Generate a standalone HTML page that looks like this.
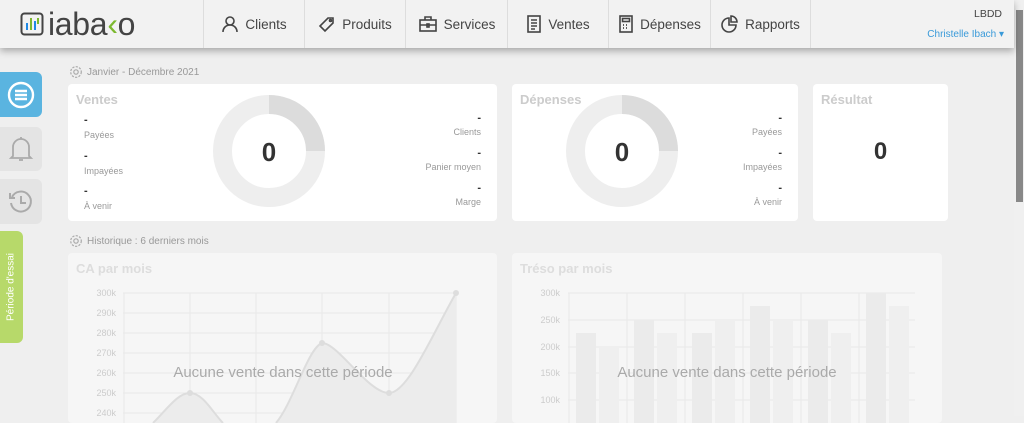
<!DOCTYPE html><html><head><meta charset="utf-8"><style>
*{margin:0;padding:0;box-sizing:border-box}
body{width:1024px;height:416px;overflow:hidden;background:#efefef;font-family:"Liberation Sans",sans-serif;position:relative;color:#555}
.hdr{position:absolute;left:0;top:0;width:1014px;height:48px;background:#f2f2f2;box-shadow:0 3px 7px rgba(0,0,0,.3);z-index:2}
.nav{position:absolute;top:0;height:48px;border-left:1px solid #ddd;display:flex;align-items:center;justify-content:center;font-size:13.5px;color:#444;gap:6px}
.abs{position:absolute}
.card{position:absolute;background:#fff;border-radius:4px}
.t{position:absolute;font-size:13px;font-weight:bold;color:#ccc}
.sm{position:absolute;font-size:9px;color:#999}
.dash{position:absolute;font-size:11px;color:#333;font-weight:bold}
.sec{position:absolute;font-size:10px;color:#999;display:flex;align-items:center;gap:4px}
.side{position:absolute;left:0;width:42px;border-radius:0 6px 6px 0;display:flex;align-items:center;justify-content:center}
</style></head><body>
<div class="hdr">
 <div class="abs" style="left:20px;top:11px;display:flex;align-items:center;gap:4px">
  <svg width="24" height="24" viewBox="0 0 24 24"><rect x="1.5" y="1.5" width="21" height="21" rx="3" fill="none" stroke="#444" stroke-width="2"/><rect x="6" y="11" width="2" height="7" fill="#1e88e5"/><rect x="10" y="6" width="2" height="12" fill="#7cb82f"/><rect x="14" y="9" width="2" height="9" fill="#1e88e5"/><rect x="17" y="6" width="2" height="6" fill="#7cb82f"/></svg>
  <span style="font-size:32px;color:#444;letter-spacing:-0.3px;line-height:26px">iaba<span style="color:#7cb82f">&lsaquo;</span>o</span>
 </div>
 <div class="nav" style="left:203px;width:101px"><svg width="18" height="18" viewBox="0 0 18 18" fill="none" stroke="#444" stroke-width="1.6"><circle cx="9" cy="6" r="4"/><path d="M2 17c0-4 3-7 7-7s7 3 7 7"/></svg>Clients</div>
 <div class="nav" style="left:304px;width:101px"><svg width="18" height="18" viewBox="0 0 18 18" fill="none" stroke="#444" stroke-width="1.6"><path d="M10 3l5 0 0 5-8 8-5-5z"/><circle cx="12.5" cy="5.5" r="1"/></svg>Produits</div>
 <div class="nav" style="left:405px;width:102px"><svg width="20" height="18" viewBox="0 0 20 18" fill="none" stroke="#444" stroke-width="1.6"><rect x="2" y="5" width="16" height="11"/><path d="M7 5V2h6v3M2 10h16"/><rect x="9" y="9" width="2" height="3"/></svg>Services</div>
 <div class="nav" style="left:507px;width:101px"><svg width="16" height="18" viewBox="0 0 16 18" fill="none" stroke="#444" stroke-width="1.6"><rect x="2" y="1" width="12" height="16"/><path d="M5 5h6M5 8h6M5 11h6M5 14h4"/></svg>Ventes</div>
 <div class="nav" style="left:608px;width:102px"><svg width="16" height="18" viewBox="0 0 16 18" fill="none" stroke="#444" stroke-width="1.6"><rect x="2" y="1" width="12" height="16"/><rect x="4.5" y="3.5" width="7" height="3"/><path d="M5 10h1M8 10h1M11 10h0M5 13h1M8 13h1M11 13h0" stroke-width="1.8"/></svg>Dépenses</div>
 <div class="nav" style="left:710px;width:101px;border-right:1px solid #ddd"><svg width="18" height="18" viewBox="0 0 18 18" fill="none" stroke="#444" stroke-width="1.6"><path d="M8 3a7 7 0 1 0 7 7H8z"/><path d="M10 1v6h6a6 6 0 0 0-6-6z"/></svg>Rapports</div>
 <div class="abs" style="right:12px;top:8px;font-size:10.5px;color:#444">LBDD</div>
 <div class="abs" style="right:10px;top:29px;font-size:10px;color:#3a9ad9">Christelle Ibach ▾</div>
</div>
<div class="abs" style="left:1014px;top:0;width:10px;height:416px;background:#f0f0f0"></div>
<div class="abs" style="left:1016px;top:10px;width:7px;height:192px;background:#888"></div>

<div class="side" style="top:72px;height:45px;background:#5ab4e0"><svg width="30" height="30" viewBox="0 0 30 30" fill="none" stroke="#fff" stroke-width="2.4"><circle cx="15" cy="15" r="12"/><path d="M9 11h12M9 15h12M9 19h12"/></svg></div>
<div class="side" style="top:127px;height:44px;background:#e4e4e4"><svg width="26" height="28" viewBox="0 0 26 28" fill="none" stroke="#aaa" stroke-width="1.8"><path d="M5 21V12a8 8 0 0 1 16 0v9l2 2H3z"/><path d="M11 25h4"/><path d="M13 2v2"/></svg></div>
<div class="side" style="top:179px;height:45px;background:#e4e4e4"><svg width="28" height="28" viewBox="0 0 28 28" fill="none" stroke="#aaa" stroke-width="2"><path d="M5 9a10 10 0 1 1-1 6"/><path d="M3 5v5h5"/><path d="M14 8v7h5"/></svg></div>
<div class="abs" style="left:0;top:231px;width:23px;height:112px;background:#b7d96a;border-radius:0 6px 6px 0"></div>
<div class="abs" style="left:11px;top:287px;transform:translate(-50%,-50%) rotate(-90deg);font-size:10px;color:#fff;white-space:nowrap">Période d'essai</div>

<div class="sec" style="left:69px;top:65px"><svg width="14" height="14" viewBox="0 0 14 14" fill="none" stroke="#aaa" stroke-width="1.2"><circle cx="7" cy="7" r="2.2"/><circle cx="7" cy="7" r="5.3" stroke-dasharray="2.2 1.3"/></svg>Janvier - Décembre 2021</div>
<div class="sec" style="left:69px;top:234px"><svg width="14" height="14" viewBox="0 0 14 14" fill="none" stroke="#aaa" stroke-width="1.2"><circle cx="7" cy="7" r="2.2"/><circle cx="7" cy="7" r="5.3" stroke-dasharray="2.2 1.3"/></svg>Historique : 6 derniers mois</div>

<div class="card" style="left:68px;top:84px;width:429px;height:137px">
 <div class="t" style="left:8px;top:8px">Ventes</div>
 <div class="dash" style="left:16px;top:30px">-</div><div class="sm" style="left:16px;top:46px">Payées</div>
 <div class="dash" style="left:16px;top:66px">-</div><div class="sm" style="left:16px;top:82px">Impayées</div>
 <div class="dash" style="left:16px;top:101px">-</div><div class="sm" style="left:16px;top:117px">À venir</div>
 <div class="dash" style="right:16px;top:28px">-</div><div class="sm" style="right:16px;top:43px">Clients</div>
 <div class="dash" style="right:16px;top:63px">-</div><div class="sm" style="right:16px;top:78px">Panier moyen</div>
 <div class="dash" style="right:16px;top:98px">-</div><div class="sm" style="right:16px;top:113px">Marge</div>
 <svg class="abs" style="left:145px;top:11px" width="112" height="112" viewBox="0 0 112 112"><circle cx="56" cy="56" r="46.5" fill="none" stroke="#eeeeee" stroke-width="19"/><path d="M56 9.5A46.5 46.5 0 0 1 102.5 56" fill="none" stroke="#dcdcdc" stroke-width="19"/><text x="56" y="66" text-anchor="middle" font-size="26" font-weight="bold" fill="#333" font-family="Liberation Sans">0</text></svg>
</div>
<div class="card" style="left:512px;top:84px;width:286px;height:137px">
 <div class="t" style="left:8px;top:8px">Dépenses</div>
 <div class="dash" style="right:16px;top:28px">-</div><div class="sm" style="right:16px;top:43px">Payées</div>
 <div class="dash" style="right:16px;top:63px">-</div><div class="sm" style="right:16px;top:78px">Impayées</div>
 <div class="dash" style="right:16px;top:98px">-</div><div class="sm" style="right:16px;top:113px">À venir</div>
 <svg class="abs" style="left:54px;top:11px" width="112" height="112" viewBox="0 0 112 112"><circle cx="56" cy="56" r="46.5" fill="none" stroke="#eeeeee" stroke-width="19"/><path d="M56 9.5A46.5 46.5 0 0 1 102.5 56" fill="none" stroke="#dcdcdc" stroke-width="19"/><text x="56" y="66" text-anchor="middle" font-size="26" font-weight="bold" fill="#333" font-family="Liberation Sans">0</text></svg>
</div>
<div class="card" style="left:813px;top:84px;width:135px;height:137px">
 <div class="t" style="left:8px;top:8px">Résultat</div>
 <div class="abs" style="left:0;width:135px;top:54px;text-align:center;font-size:24px;font-weight:bold;color:#333">0</div>
</div>

<div class="card" style="left:68px;top:253px;width:429px;height:170px;background:#f6f6f6">
 <div class="t" style="left:8px;top:8px;color:#ddd">CA par mois</div>
 <svg class="abs" style="left:0;top:0" width="429" height="170">
  <g stroke="#e8e8e8" stroke-width="1">
   <line x1="55" y1="40" x2="388" y2="40"/><line x1="55" y1="60" x2="388" y2="60"/><line x1="55" y1="80" x2="388" y2="80"/><line x1="55" y1="100" x2="388" y2="100"/><line x1="55" y1="120" x2="388" y2="120"/><line x1="55" y1="140" x2="388" y2="140"/><line x1="55" y1="160" x2="388" y2="160"/>
   <line x1="56" y1="40" x2="56" y2="170"/><line x1="122" y1="40" x2="122" y2="170"/><line x1="188" y1="40" x2="188" y2="170"/><line x1="254" y1="40" x2="254" y2="170"/><line x1="321" y1="40" x2="321" y2="170"/><line x1="388" y1="40" x2="388" y2="170"/>
  </g>
  <path d="M85 170 C100 155 110 140 122 140 C135 140 145 160 155 170 L208 170 C225 150 240 95 254 90 C270 90 300 140 321 140 C340 140 365 80 388 40 L388 170Z" fill="#ececec"/>
  <path d="M85 170 C100 155 110 140 122 140 C135 140 145 160 155 170 M208 170 C225 150 240 95 254 90 C270 90 300 140 321 140 C340 140 365 80 388 40" fill="none" stroke="#ddd" stroke-width="2"/>
  <g fill="#ddd"><circle cx="122" cy="140" r="3"/><circle cx="254" cy="90" r="3"/><circle cx="321" cy="140" r="3"/><circle cx="388" cy="40" r="3"/></g>
  <g font-size="9" fill="#ccc" text-anchor="end" font-family="Liberation Sans"><text x="48" y="43">300k</text><text x="48" y="63">290k</text><text x="48" y="83">280k</text><text x="48" y="103">270k</text><text x="48" y="123">260k</text><text x="48" y="143">250k</text><text x="48" y="163">240k</text></g>
  <text x="215" y="124" text-anchor="middle" font-size="15" fill="#aaa" font-family="Liberation Sans">Aucune vente dans cette période</text>
 </svg>
</div>
<div class="card" style="left:512px;top:253px;width:430px;height:170px;background:#f6f6f6">
 <div class="t" style="left:8px;top:8px;color:#ddd">Tréso par mois</div>
 <svg class="abs" style="left:0;top:0" width="430" height="170">
  <g stroke="#e8e8e8"><line x1="56" y1="40" x2="403" y2="40"/><line x1="56" y1="67" x2="403" y2="67"/><line x1="56" y1="94" x2="403" y2="94"/><line x1="56" y1="120" x2="403" y2="120"/><line x1="56" y1="147" x2="403" y2="147"/>
  <line x1="57" y1="40" x2="57" y2="170"/><line x1="115" y1="40" x2="115" y2="170"/><line x1="173" y1="40" x2="173" y2="170"/><line x1="231" y1="40" x2="231" y2="170"/><line x1="289" y1="40" x2="289" y2="170"/><line x1="347" y1="40" x2="347" y2="170"/></g>
  <g fill="#ebebeb"><rect x="64" y="80" width="20" height="90"/><rect x="122" y="67" width="20" height="103"/><rect x="180" y="80" width="20" height="90"/><rect x="238" y="53" width="20" height="117"/><rect x="296" y="67" width="20" height="103"/><rect x="354" y="40" width="20" height="130"/></g>
  <g fill="#efefef"><rect x="87" y="94" width="20" height="76"/><rect x="145" y="80" width="20" height="90"/><rect x="203" y="67" width="20" height="103"/><rect x="261" y="67" width="20" height="103"/><rect x="319" y="80" width="20" height="90"/><rect x="377" y="53" width="20" height="117"/></g>
  <g font-size="9" fill="#ccc" text-anchor="end" font-family="Liberation Sans"><text x="48" y="43">300k</text><text x="48" y="70">250k</text><text x="48" y="97">200k</text><text x="48" y="123">150k</text><text x="48" y="150">100k</text></g>
  <text x="215" y="124" text-anchor="middle" font-size="15" fill="#aaa" font-family="Liberation Sans">Aucune vente dans cette période</text>
 </svg>
</div>
</body></html>
